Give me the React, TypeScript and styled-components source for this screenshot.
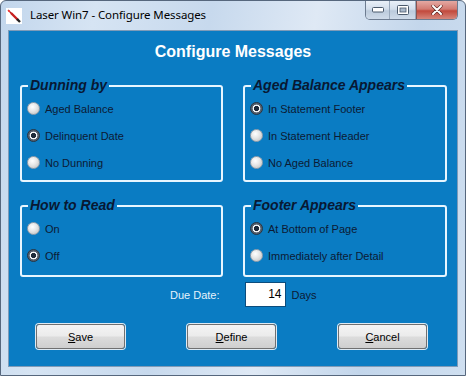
import React from 'react';
import styled, { createGlobalStyle } from 'styled-components';

const GlobalStyle = createGlobalStyle`
  html, body {
    margin: 0;
    padding: 0;
    background: #ffffff;
  }
  body {
    font-family: 'Liberation Sans', Arial, sans-serif;
  }
`;

const Window = styled.div`
  width: 466px;
  height: 376px;
  box-sizing: border-box;
  display: flex;
  flex-direction: column;
  border: 1px solid #56677d;
  border-radius: 6px 6px 0 0;
  background: linear-gradient(
    100deg,
    #c2d6ec 0%,
    #d6e4f3 18%,
    #c7d9ed 40%,
    #dfe9f5 60%,
    #c3d6eb 80%,
    #cfdff0 100%
  );
  overflow: hidden;
`;

const TitleBar = styled.div`
  height: 29px;
  flex: none;
  display: flex;
  align-items: flex-start;
`;

const AppIcon = styled.svg`
  width: 16px;
  height: 16px;
  margin: 7px 0 0 5px;
  flex: none;
`;

const TitleText = styled.div`
  margin: 6px 0 0 8px;
  font-family: 'Noto Sans', 'Open Sans', sans-serif;
  font-size: 11.5px;
  line-height: 16px;
  color: #000000;
  letter-spacing: -0.1px;
`;

const Caption = styled.div`
  margin-left: auto;
  margin-right: 7px;
  display: flex;
  height: 18px;
  border: 1px solid #6d7c90;
  border-top: none;
  border-radius: 0 0 5px 5px;
  overflow: hidden;
`;

const CapButton = styled.div<{ $close?: boolean; $w: number }>`
  width: ${(p) => p.$w}px;
  height: 18px;
  display: flex;
  align-items: center;
  justify-content: center;
  box-sizing: border-box;
  border-left: ${(p) => (p.$close ? '1px solid #8a5450' : 'none')};
  border-right: 1px solid #98a8bb;
  background: ${(p) =>
    p.$close
      ? 'linear-gradient(#e4a9a3 0%, #d27b72 45%, #c2493c 55%, #d6867b 100%)'
      : 'linear-gradient(#e9f0f8 0%, #d3deeb 45%, #bccbdc 55%, #cfdbe9 100%)'};
  &:last-child {
    border-right: none;
  }
`;

const Body = styled.div`
  flex: 1;
  display: flex;
  padding: 0 7px 8px 7px;
`;

const Client = styled.div`
  flex: 1;
  background: #0a7cc3;
  border: 1px solid #7f9bb8;
  display: flex;
  flex-direction: column;
`;

const Heading = styled.div`
  margin-top: 11px;
  height: 20px;
  line-height: 20px;
  text-align: center;
  font-size: 16px;
  font-weight: bold;
  color: #ffffff;
`;

const Groups = styled.div`
  margin-top: 23px;
  padding: 0 10px 0 11px;
  display: grid;
  grid-template-columns: 203px 204px;
  grid-template-rows: 97px 72px;
  column-gap: 20px;
  row-gap: 23px;
`;

const Group = styled.div`
  position: relative;
  box-sizing: border-box;
  border: 2px solid #e8f6ff;
  border-radius: 3px;
  padding: 15px 0 0 5px;
  display: flex;
  flex-direction: column;
  gap: 14px;
`;

const Legend = styled.div`
  position: absolute;
  top: -10px;
  left: 6px;
  padding: 0 2px;
  background: #0a7cc3;
  font-size: 14px;
  line-height: 16px;
  font-weight: bold;
  font-style: italic;
  color: #081833;
`;

const Option = styled.div`
  display: flex;
  align-items: center;
  height: 13px;
  font-size: 11px;
  color: #0c1a34;
  white-space: nowrap;
`;

const RadioDot = styled.span<{ $on?: boolean }>`
  width: 13px;
  height: 13px;
  box-sizing: border-box;
  border-radius: 50%;
  margin-right: 5px;
  flex: none;
  border: 1px solid ${(p) => (p.$on ? '#2a3440' : '#9aa3ad')};
  background: ${(p) =>
    p.$on
      ? 'radial-gradient(circle at 50% 50%, #1d2a3a 0 2.4px, #f4f6f8 2.9px 3.6px, #56616e 4.2px)'
      : 'radial-gradient(circle at 40% 35%, #ffffff 0%, #e6e6e6 45%, #bcbcbc 100%)'};
`;

const DueRow = styled.div`
  margin-top: 5px;
  padding-left: 161px;
  display: flex;
  align-items: center;
  height: 25px;
  font-size: 11px;
  white-space: nowrap;
`;

const DueLabel = styled.span`
  color: #e6f2fb;
  margin-right: 25px;
`;

const DaysInput = styled.div`
  width: 41px;
  height: 25px;
  box-sizing: border-box;
  background: #ffffff;
  border: 1px solid #0b4c7d;
  color: #000000;
  font-size: 12px;
  line-height: 23px;
  text-align: right;
  padding-right: 3px;
`;

const DaysLabel = styled.span`
  margin-left: 6px;
  color: #0c1a34;
`;

const ButtonRow = styled.div`
  margin-top: 17px;
  padding: 0 30px 0 27px;
  display: flex;
  justify-content: space-between;
`;

const PushButton = styled.div`
  width: 89px;
  height: 25px;
  box-sizing: border-box;
  border: 1px solid #707070;
  border-radius: 3px;
  box-shadow: 0 0 0 1px #dfeaf3;
  background: linear-gradient(#f4f4f4 0%, #ebebeb 48%, #dcdcdc 52%, #cfcfcf 100%);
  display: flex;
  align-items: center;
  justify-content: center;
  font-size: 11px;
  color: #000000;
  u {
    text-decoration: underline;
  }
`;

type Opt = { label: string; on?: boolean };

const GroupBox = ({ title, options }: { title: string; options: Opt[] }) => (
  <Group>
    <Legend>{title}</Legend>
    {options.map((o) => (
      <Option key={o.label}>
        <RadioDot $on={o.on} />
        {o.label}
      </Option>
    ))}
  </Group>
);

export default function App() {
  return (
    <>
      <GlobalStyle />
      <Window>
        <TitleBar>
          <AppIcon viewBox="0 0 16 16">
            <rect x="0" y="0" width="16" height="16" fill="#ffffff" />
            <line x1="2" y1="2" x2="6" y2="6" stroke="#b01818" strokeWidth="1.2" />
            <line x1="5" y1="5" x2="12" y2="12" stroke="#c81e1e" strokeWidth="2.4" />
            <line x1="11" y1="11" x2="14" y2="14" stroke="#222222" strokeWidth="2.4" />
            <circle cx="3" cy="3" r="1" fill="#ff4040" />
          </AppIcon>
          <TitleText>Laser Win7 - Configure Messages</TitleText>
          <Caption>
            <CapButton $w={24}>
              <svg width="12" height="6" viewBox="0 0 12 6">
                <rect x="0.5" y="0.5" width="11" height="4.5" rx="1" fill="#ffffff" stroke="#4b5a6c" />
              </svg>
            </CapButton>
            <CapButton $w={26}>
              <svg width="12" height="10" viewBox="0 0 12 10">
                <rect x="0.5" y="0.5" width="11" height="9" rx="1" fill="#ffffff" stroke="#4b5a6c" />
                <rect x="3" y="3" width="6" height="4" fill="#a9b8ca" stroke="#4b5a6c" strokeWidth="0.8" />
              </svg>
            </CapButton>
            <CapButton $w={41} $close>
              <svg width="12" height="10" viewBox="0 0 12 10">
                <path d="M2 1 L10 9 M10 1 L2 9" stroke="#5a2420" strokeWidth="3.2" strokeLinecap="round" />
                <path d="M2 1 L10 9 M10 1 L2 9" stroke="#ffffff" strokeWidth="2" strokeLinecap="round" />
              </svg>
            </CapButton>
          </Caption>
        </TitleBar>
        <Body>
          <Client>
            <Heading>Configure Messages</Heading>
            <Groups>
              <GroupBox
                title="Dunning by"
                options={[
                  { label: 'Aged Balance' },
                  { label: 'Delinquent Date', on: true },
                  { label: 'No Dunning' },
                ]}
              />
              <GroupBox
                title="Aged Balance Appears"
                options={[
                  { label: 'In Statement Footer', on: true },
                  { label: 'In Statement Header' },
                  { label: 'No Aged Balance' },
                ]}
              />
              <GroupBox
                title="How to Read"
                options={[{ label: 'On' }, { label: 'Off', on: true }]}
              />
              <GroupBox
                title="Footer Appears"
                options={[
                  { label: 'At Bottom of Page', on: true },
                  { label: 'Immediately after Detail' },
                ]}
              />
            </Groups>
            <DueRow>
              <DueLabel>Due Date:</DueLabel>
              <DaysInput>14</DaysInput>
              <DaysLabel>Days</DaysLabel>
            </DueRow>
            <ButtonRow>
              <PushButton>
                <u>S</u>ave
              </PushButton>
              <PushButton>
                <u>D</u>efine
              </PushButton>
              <PushButton>
                <u>C</u>ancel
              </PushButton>
            </ButtonRow>
          </Client>
        </Body>
      </Window>
    </>
  );
}
